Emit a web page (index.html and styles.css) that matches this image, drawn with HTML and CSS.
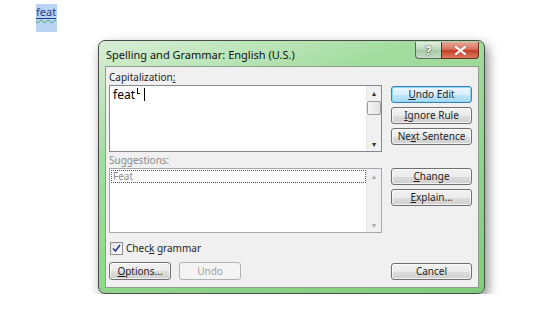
FILE: index.html
```html
<!DOCTYPE html>
<html lang="en">
  <head>
    <meta charset="utf-8" />
    <title>Spelling and Grammar</title>
    <link rel="stylesheet" href="styles.css">
  </head>

  <body>
    <div class="doc">
      <span class="doc__word"><span class="doc__wave">feat</span></span>
    </div>

    <div class="dialog">
      <div class="dialog__titlebar">
        <span class="dialog__title">Spelling and Grammar: English (U.S.)</span>
        <div class="dialog__caption">
          <span class="caption-btn caption-btn_help">?</span>
          <span class="caption-btn caption-btn_close">
            <svg width="11" height="9" viewBox="0 0 11 9">
              <path d="M1 1l9 7M10 1l-9 7" stroke="#fff" stroke-width="2.2" stroke-linecap="square" />
            </svg>
          </span>
        </div>
      </div>

      <div class="dialog__client">
        <!-- ряд 1: исправление -->
        <div class="pane">
          <div class="pane__label">Capitalization<u>:</u></div>
          <div class="box box_edit">
            <div class="box__text">feat<span class="mark"></span><span class="caret"></span></div>
            <div class="scroll">
              <span class="scroll__arrow">&#9652;</span>
              <span class="scroll__thumb"></span>
              <span class="scroll__fill"></span>
              <span class="scroll__arrow">&#9662;</span>
            </div>
          </div>
        </div>
        <div class="actions actions_top">
          <a class="btn btn_default" href="#"><u>U</u>ndo Edit</a>
          <a class="btn" href="#"><u>I</u>gnore Rule</a>
          <a class="btn" href="#">Ne<u>x</u>t Sentence</a>
        </div>

        <!-- ряд 2: варианты -->
        <div class="pane">
          <div class="pane__label pane__label_off">Suggestions:</div>
          <div class="box box_list">
            <div class="box__list">
              <div class="box__item">Feat</div>
            </div>
            <div class="scroll scroll_off">
              <span class="scroll__arrow">&#9652;</span>
              <span class="scroll__fill"></span>
              <span class="scroll__arrow">&#9662;</span>
            </div>
          </div>
        </div>
        <div class="actions actions_mid">
          <a class="btn" href="#"><u>C</u>hange</a>
          <a class="btn" href="#"><u>E</u>xplain...</a>
        </div>

        <!-- ряд 3 -->
        <label class="check">
          <span class="check__box">
            <svg width="9" height="9" viewBox="0 0 9 9">
              <path d="M1 4.5l2.5 2.5 4.5-6" fill="none" stroke="#2a3f8f" stroke-width="1.6" />
            </svg>
          </span>
          <span>Chec<u>k</u> grammar</span>
        </label>

        <!-- ряд 4 -->
        <div class="footer">
          <a class="btn btn_small" href="#"><u>O</u>ptions...</a>
          <a class="btn btn_small btn_off" href="#">Undo</a>
        </div>
        <div class="actions actions_bottom">
          <a class="btn" href="#">Cancel</a>
        </div>
      </div>
    </div>
  </body>
</html>
```

FILE: styles.css
```css
body {
  margin: 0;
  font-family: "Noto Sans", "Open Sans", sans-serif;
  font-size: 10px;
  color: #1e1e1e;
  background: #fff;
}

u {
  text-decoration: underline;
  text-underline-offset: 1px;
}

/* слово в документе */
.doc {
  margin-left: 36px;
  padding-top: 4px;
  height: 28px;
}

.doc__word {
  display: inline-block;
  width: 21px;
  height: 28px;
  font-size: 11px;
  line-height: 15px;
  color: #1f3a93;
  background: #b9d3f2;
}

.doc__wave {
  display: inline-block;
  border-bottom: 1px solid #1f3a93;
  line-height: 13px;
  text-decoration: underline wavy #3aa76d;
  text-underline-offset: 3px;
  text-decoration-thickness: 1px;
}

/* окно */
.dialog {
  margin: 8px 0 0 98px;
  width: 387px;
  border: 1px solid #4a4a4a;
  border-radius: 7px;
  background: linear-gradient(160deg, #d8efd6 0%, #a3dc9f 30%, #80cc7c 100%);
  box-shadow: 3px 5px 12px rgba(0, 0, 0, 0.45);
  display: flex;
  flex-direction: column;
  padding: 0 5px 5px 6px;
  box-sizing: border-box;
}

.dialog__titlebar {
  flex-shrink: 0;
  display: flex;
  justify-content: space-between;
  height: 25px;
}

.dialog__title {
  padding: 6px 0 0 1px;
  font-size: 11px;
  color: #111;
}

.dialog__caption {
  display: flex;
  margin-top: 1px;
  height: 17px;
}

.caption-btn {
  display: flex;
  align-items: center;
  justify-content: center;
  border: 1px solid #5a6b5a;
  border-top: 0;
  box-sizing: border-box;
}

.caption-btn_help {
  width: 26px;
  border-radius: 0 0 0 4px;
  border-right: 0;
  background: linear-gradient(#e4f0e4, #b9d4b9 50%, #a7c7a7 51%, #c4dcc4);
  color: #fff;
  font-weight: bold;
  font-size: 12px;
  text-shadow: 0 0 2px #3a4a3a, 0 0 1px #3a4a3a;
}

.caption-btn_close {
  width: 38px;
  border-radius: 0 0 4px 0;
  border-color: #6e2a20;
  background: linear-gradient(#e9a899, #d46a56 50%, #c43c25 51%, #dc7d5e);
}

.dialog__client {
  background: #f0f0f0;
  border: 1px solid #8e9c8e;
  display: grid;
  grid-template-columns: 273px 81px;
  align-content: start;
  column-gap: 9px;
  padding: 3px 7px 7px 3px;
}

.pane__label {
  line-height: 15px;
  height: 15px;
}

.pane__label_off {
  color: #8a8a8a;
  margin-top: 1px;
}

.box {
  display: flex;
  border: 1px solid #828790;
  background: #fff;
}

.box_edit {
  height: 65px;
}

.box_list {
  height: 63px;
  border-color: #a5a9ae;
}

.box__text {
  flex: 1;
  padding: 1px 0 0 3px;
  font-size: 12px;
  line-height: 16px;
  color: #000;
}

.mark {
  display: inline-block;
  width: 2px;
  height: 5px;
  margin-left: 2px;
  border-left: 1px solid #000;
  border-bottom: 1px solid #000;
  vertical-align: 5px;
}

.caret {
  display: inline-block;
  width: 1px;
  height: 13px;
  margin-left: 4px;
  background: #000;
  vertical-align: -2px;
}

.box__list {
  flex: 1;
  padding: 1px 0 0 1px;
}

.box__item {
  border: 1px dotted #555;
  line-height: 11px;
  color: #8a8a8a;
  padding-left: 1px;
}

.scroll {
  width: 14px;
  display: flex;
  flex-direction: column;
  background: #f0f0f0;
  border-left: 1px solid #e8e8e8;
}

.scroll__arrow {
  height: 14px;
  font-size: 8px;
  line-height: 14px;
  text-align: center;
  color: #333;
}

.scroll__thumb {
  margin: 1px 0;
  height: 12px;
  border: 1px solid #9a9a9a;
  border-radius: 2px;
  background: linear-gradient(90deg, #f6f6f6, #e2e2e2);
}

.scroll__fill {
  flex: 1;
}

.scroll_off .scroll__arrow {
  color: #a8a8a8;
}

/* кнопки */
.actions {
  display: flex;
  flex-direction: column;
  gap: 4px;
}

.actions_top {
  padding-top: 16px;
}

.actions_mid {
  padding-top: 16px;
}

.actions_bottom {
  margin-top: 7px;
}

.btn {
  display: block;
  height: 17px;
  box-sizing: border-box;
  border: 1px solid #707070;
  border-radius: 3px;
  background: linear-gradient(#f2f2f2, #ebebeb 50%, #dddddd 51%, #cfcfcf);
  box-shadow: inset 0 0 0 1px rgba(255, 255, 255, 0.7);
  color: #1e1e1e;
  text-decoration: none;
  text-align: center;
  line-height: 15px;
}

.btn_default {
  border-color: #3c7fb1;
  box-shadow: inset 0 0 0 1px #8fd8f8;
  background: linear-gradient(#eaf6fd, #d9f0fc 50%, #bee6fd 51%, #a7d9f5);
}

.btn_small {
  width: 62px;
  height: 18px;
  line-height: 16px;
}

.btn_off {
  border-color: #adb2b5;
  background: #f4f4f4;
  color: #a0a0a0;
  box-shadow: none;
}

.check {
  grid-column: 1 / 3;
  display: flex;
  align-items: center;
  gap: 3px;
  margin-top: 8px;
  margin-left: 1px;
  line-height: 15px;
}

.check__box {
  display: flex;
  align-items: center;
  justify-content: center;
  width: 11px;
  height: 11px;
  border: 1px solid #8f8f8f;
  background: linear-gradient(135deg, #e2e2e2, #fcfcfc);
}

.footer {
  display: flex;
  gap: 8px;
  margin-top: 6px;
}
```
